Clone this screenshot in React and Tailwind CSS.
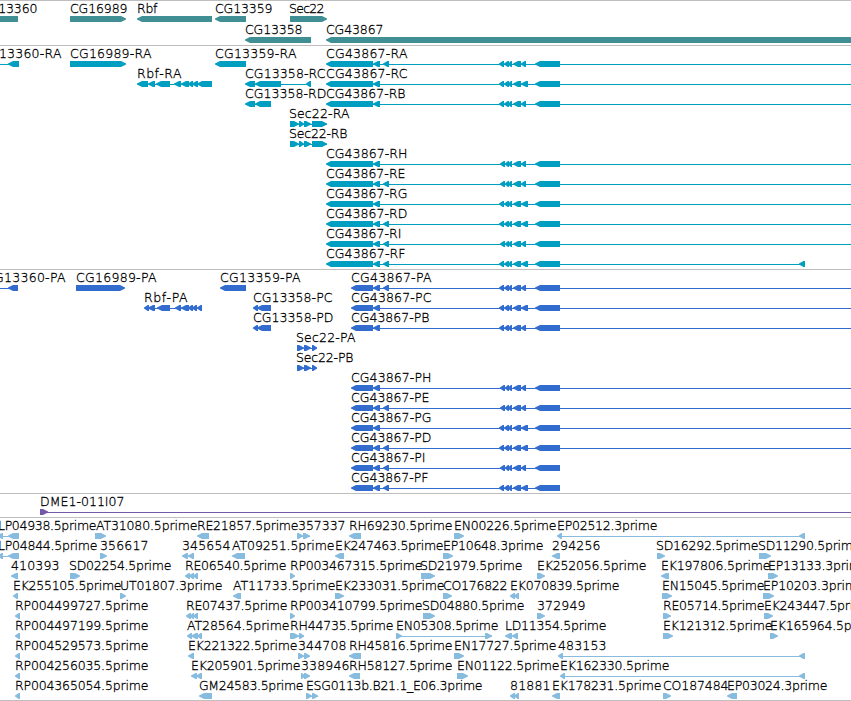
const GENE = '#3f8f94';
const MRNA = '#009fc1';
const CDS = '#326ccf';
const BAC = '#7359a8';
const EST = '#87bcdf';

// Feature: [row, label, labelStart, labelEnd, direction, blocks, lineEnd]
const genes = [
  [0, 'CG13360', -20, 37, 'n', [[-5, 18]]],
  [0, 'CG16989', 70, 127, 'r', [[70, 126]]],
  [0, 'Rbf', 137, 157, 'l', [[137, 212]]],
  [0, 'CG13359', 215, 272, 'l', [[215, 246]]],
  [0, 'Sec22', 289, 324, 'r', [[290, 327]]],
  [1, 'CG13358', 245, 302, 'l', [[245, 311]]],
  [1, 'CG43867', 326, 383, 'l', [[326, 860]]],
];

const end5 = [[373, 380], [383, 389]];
const midA = [[499, 504], [504, 509], [508, 512], [513, 521], [521, 526], [535, 560]];
const midB = [[500, 505], [505, 509], [508, 512], [513, 521], [521, 526], [535, 560]];
const midC = [[499, 504], [504, 509], [508, 512], [513, 521], [521, 528], [535, 560]];
const near = [[373, 380]];

const longRows = [
  [0, 'A', end5, midA, 860],
  [1, 'C', near, midC, 860],
  [2, 'B', near, midA, 860],
  [5, 'H', near, midB, 860],
  [6, 'E', end5, midB, 860],
  [7, 'G', near, midC, 860],
  [8, 'D', end5, midC, 860],
  [9, 'I', end5, midB, 860],
  [10, 'F', end5, midC, 805],
];

const transcripts = [
  [0, 'CG13360-RA', -20, 61, 'l', [[-9, -4], [8, 19]]],
  [0, 'CG16989-RA', 70, 151, 'r', [[70, 126]]],
  [1, 'Rbf-RA', 137, 181, 'l', [[137, 148], [148, 155], [156, 170], [174, 181], [181, 189], [188, 193], [192, 198], [197, 212]]],
  [0, 'CG13359-RA', 215, 296, 'l', [[215, 246]]],
  [1, 'CG13358-RC', 245, 325, 'l', [[245, 255], [255, 281], [306, 311]]],
  [2, 'CG13358-RD', 245, 326, 'l', [[245, 255], [255, 271]]],
  [3, 'Sec22-RA', 289, 349, 'r', [[290, 299], [299, 304], [304, 311], [312, 327]]],
  [4, 'Sec22-RB', 289, 347, 'r', [[290, 299], [299, 304], [304, 311], [312, 327]]],
  ...longRows.map(([row, s, a, b, end]) => [
    row, 'CG43867-R' + s, 326, s === 'I' ? 401 : s === 'E' || s === 'B' || s === 'F' ? 405 : 407, 'l',
    [[326, 373], ...a, ...b, ...(s === 'F' ? [[799, 805]] : [])], end,
  ]),
];

const proteins = [
  [0, 'CG13360-PA', -15, 65, 'l', [[-9, -4], [8, 18]]],
  [0, 'CG16989-PA', 76, 156, 'r', [[76, 125]]],
  [1, 'Rbf-PA', 144, 187, 'l', [[144, 149], [148, 155], [157, 170], [175, 181], [181, 189], [188, 193], [192, 197], [197, 202]]],
  [0, 'CG13359-PA', 220, 300, 'l', [[220, 246]]],
  [1, 'CG13358-PC', 253, 332, 'l', [[253, 258], [257, 271]]],
  [2, 'CG13358-PD', 253, 333, 'l', [[253, 258], [257, 271]]],
  [3, 'Sec22-PA', 296, 355, 'r', [[297, 304], [304, 311], [312, 317]]],
  [4, 'Sec22-PB', 296, 353, 'r', [[297, 304], [304, 311], [312, 317]]],
  ...longRows.map(([row, s, a, b]) => [
    row, 'CG43867-P' + s, 351, s === 'I' ? 425 : s === 'F' ? 428 : s === 'E' || s === 'B' ? 429 : 431, 'l',
    [[351, 373], ...a, ...b], row > 8 ? 560 : 860,
  ]),
];

const bac = [[0, 'DME1-011I07', 40, 124, 'r', [[40, 48]], 860]];

const ests = [
  [0, 'LP04938.5prime', -2, 96, 'l', [[-2, 3], [8, 19]]],
  [0, 'AT31080.5prime', 96, 197, 'r', [[95, 106]]],
  [0, 'RE21857.5prime', 197, 298, 'l', [[197, 209]]],
  [0, '357337', 298, 345, 'r', [[297, 303], [303, 310]]],
  [0, 'RH69230.5prime', 349, 452, 'l', [[349, 361]]],
  [0, 'EN00226.5prime', 454, 556, 'r', [[454, 464]]],
  [0, 'EP02512.3prime', 557, 657, 'l', [[557, 562], [799, 805]]],
  [1, 'LP04844.5prime', -2, 97, 'l', [[-2, 3], [8, 19]]],
  [1, '356617', 100, 148, 'r', [[100, 107]]],
  [1, '345654', 182, 230, 'l', [[182, 188], [188, 194]]],
  [1, 'AT09251.5prime', 232, 334, 'l', [[232, 245]]],
  [1, 'EK247463.5prime', 335, 443, 'l', [[335, 344]]],
  [1, 'EP10648.3prime', 443, 543, 'r', [[443, 453]]],
  [1, '294256', 552, 600, 'l', [[552, 560]]],
  [1, 'SD16292.5prime', 656, 758, 'r', [[657, 665]]],
  [1, 'SD11290.5prime', 758, 860, 'r', [[759, 771]]],
  [2, '410393', 11, 59, 'l', [[11, 18]]],
  [2, 'SD02254.5prime', 69, 171, 'r', [[70, 80]]],
  [2, 'RE06540.5prime', 185, 286, 'l', [[185, 190], [189, 194], [193, 198]]],
  [2, 'RP003467315.5prime', 290, 422, 'r', [[290, 295]]],
  [2, 'SD21979.5prime', 420, 522, 'r', [[421, 435]]],
  [2, 'EK252056.5prime', 537, 646, 'r', [[537, 545]]],
  [2, 'EK197806.5prime', 661, 770, 'l', [[661, 669]]],
  [2, 'EP13133.3prime', 768, 868, 'r', [[768, 778]]],
  [3, 'EK255105.5prime', 13, 121, 'l', [[13, 18]]],
  [3, 'UT01807.3prime', 120, 222, 'r', [[120, 126]]],
  [3, 'AT11733.5prime', 233, 335, 'l', [[233, 241]]],
  [3, 'EK233031.5prime', 335, 444, 'r', [[335, 344]]],
  [3, 'CO176822', 443, 507, 'r', [[443, 452]]],
  [3, 'EK070839.5prime', 510, 619, 'l', [[510, 515], [514, 519]]],
  [3, 'EN15045.5prime', 662, 764, 'r', [[662, 672]]],
  [3, 'EP10203.3prime', 763, 864, 'r', [[763, 774]]],
  [4, 'RP004499727.5prime', 15, 148, 'l', [[15, 20]]],
  [4, 'RE07437.5prime', 186, 287, 'l', [[186, 191], [190, 194], [193, 198]]],
  [4, 'RP003410799.5prime', 290, 422, 'r', [[290, 295]]],
  [4, 'SD04880.5prime', 422, 524, 'r', [[423, 435]]],
  [4, '372949', 537, 585, 'r', [[537, 545]]],
  [4, 'RE05714.5prime', 663, 764, 'r', [[663, 671]]],
  [4, 'EK243447.5prime', 764, 872, 'r', [[764, 773]]],
  [5, 'RP004497199.5prime', 15, 148, 'l', [[15, 20]]],
  [5, 'AT28564.5prime', 187, 289, 'l', [[187, 192], [191, 198], [197, 202]]],
  [5, 'RH44735.5prime', 290, 393, 'r', [[290, 299], [299, 304]]],
  [5, 'EN05308.5prime', 396, 498, 'r', [[396, 402], [485, 492]]],
  [5, 'LD11354.5prime', 505, 606, 'l', [[505, 512], [512, 518]]],
  [5, 'EK121312.5prime', 663, 772, 'r', [[663, 673]]],
  [5, 'EK165964.5prime', 770, 879, 'r', [[770, 778]]],
  [6, 'RP004529573.5prime', 15, 148, 'l', [[15, 20]]],
  [6, 'EK221322.5prime', 188, 297, 'l', [[188, 194]]],
  [6, '344708', 298, 346, 'r', [[298, 304], [304, 310]]],
  [6, 'RH45816.5prime', 349, 452, 'l', [[349, 361]]],
  [6, 'EN17727.5prime', 454, 556, 'r', [[454, 464]]],
  [6, '483153', 558, 606, 'l', [[558, 563], [799, 805]]],
  [7, 'RP004256035.5prime', 15, 148, 'l', [[15, 20]]],
  [7, 'EK205901.5prime', 191, 300, 'l', [[191, 197], [196, 202]]],
  [7, '338946', 301, 349, 'r', [[301, 305], [304, 310]]],
  [7, 'RH58127.5prime', 349, 452, 'l', [[349, 360]]],
  [7, 'EN01122.5prime', 457, 559, 'r', [[457, 468]]],
  [7, 'EK162330.5prime', 560, 669, 'l', [[560, 565], [799, 805]]],
  [8, 'RP004365054.5prime', 15, 148, 'l', [[15, 20]]],
  [8, 'GM24583.5prime', 199, 303, 'l', [[199, 212]]],
  [8, 'ESG0113b.B21.1_E06.3prime', 306, 482, 'r', [[306, 312], [312, 318]]],
  [8, '81881', 510, 550, 'l', [[510, 515], [514, 519]]],
  [8, 'EK178231.5prime', 552, 661, 'l', [[552, 560]]],
  [8, 'CO187484', 663, 728, 'r', [[663, 671]]],
  [8, 'EP03024.3prime', 727, 827, 'l', [[727, 737]]],
];

function blockPath([a, b], y, dir) {
  if (dir === 'n') return `M${a} ${y}H${b}V${y + 6}H${a}Z`;
  const h = Math.min(5, (b - a) * 0.75);
  if (dir === 'l') {
    return `M${a} ${y + 2.5}L${a + h * 0.5} ${y + 1.2}L${a + h} ${y}H${b}V${y + 6}H${a + h}L${a + h * 0.5} ${y + 4.8}L${a} ${y + 3.5}Z`;
  }
  return `M${b} ${y + 2.5}L${b - h * 0.5} ${y + 1.2}L${b - h} ${y}H${a}V${y + 6}H${b - h}L${b - h * 0.5} ${y + 4.8}L${b} ${y + 3.5}Z`;
}

function Feature({ item, pitch }) {
  const [row, label, x1, x2, dir, blocks, lineEnd] = item;
  const y = 15 + row * pitch;
  const start = blocks[0][0];
  const end = lineEnd ?? blocks[blocks.length - 1][1];
  return (
    <g>
      <text x={x1} y={y - 3} textLength={x2 - x1 + 0.5} lengthAdjust="spacing" fill="#000" stroke="#000" strokeWidth="0.3">
        {label}
      </text>
      {(blocks.length > 1 || lineEnd) && <rect x={start + 1} y={y + 3} width={end - start - 1} height="1" />}
      <path d={blocks.map((b) => blockPath(b, y, dir)).join('')} />
    </g>
  );
}

function Track({ items, color, height, pitch = 20 }) {
  return (
    <section className="w-full border-t border-[#bebebe]">
      <svg className="block w-full overflow-hidden" height={height} fill={color}>
        {items.map((item) => (
          <Feature key={item[1]} item={item} pitch={pitch} />
        ))}
      </svg>
    </section>
  );
}

export default function App() {
  return (
    <main className="flex h-[701px] w-[851px] flex-col overflow-hidden border-b border-[#bebebe] bg-white font-['DejaVu_Sans_Light','Noto_Sans',sans-serif] text-[12.5px]">
      <Track items={genes} color={GENE} height={44} pitch={21} />
      <Track items={transcripts} color={MRNA} height={223} />
      <Track items={proteins} color={CDS} height={223} />
      <Track items={bac} color={BAC} height={23} />
      <Track items={ests} color={EST} height={182} />
    </main>
  );
}
